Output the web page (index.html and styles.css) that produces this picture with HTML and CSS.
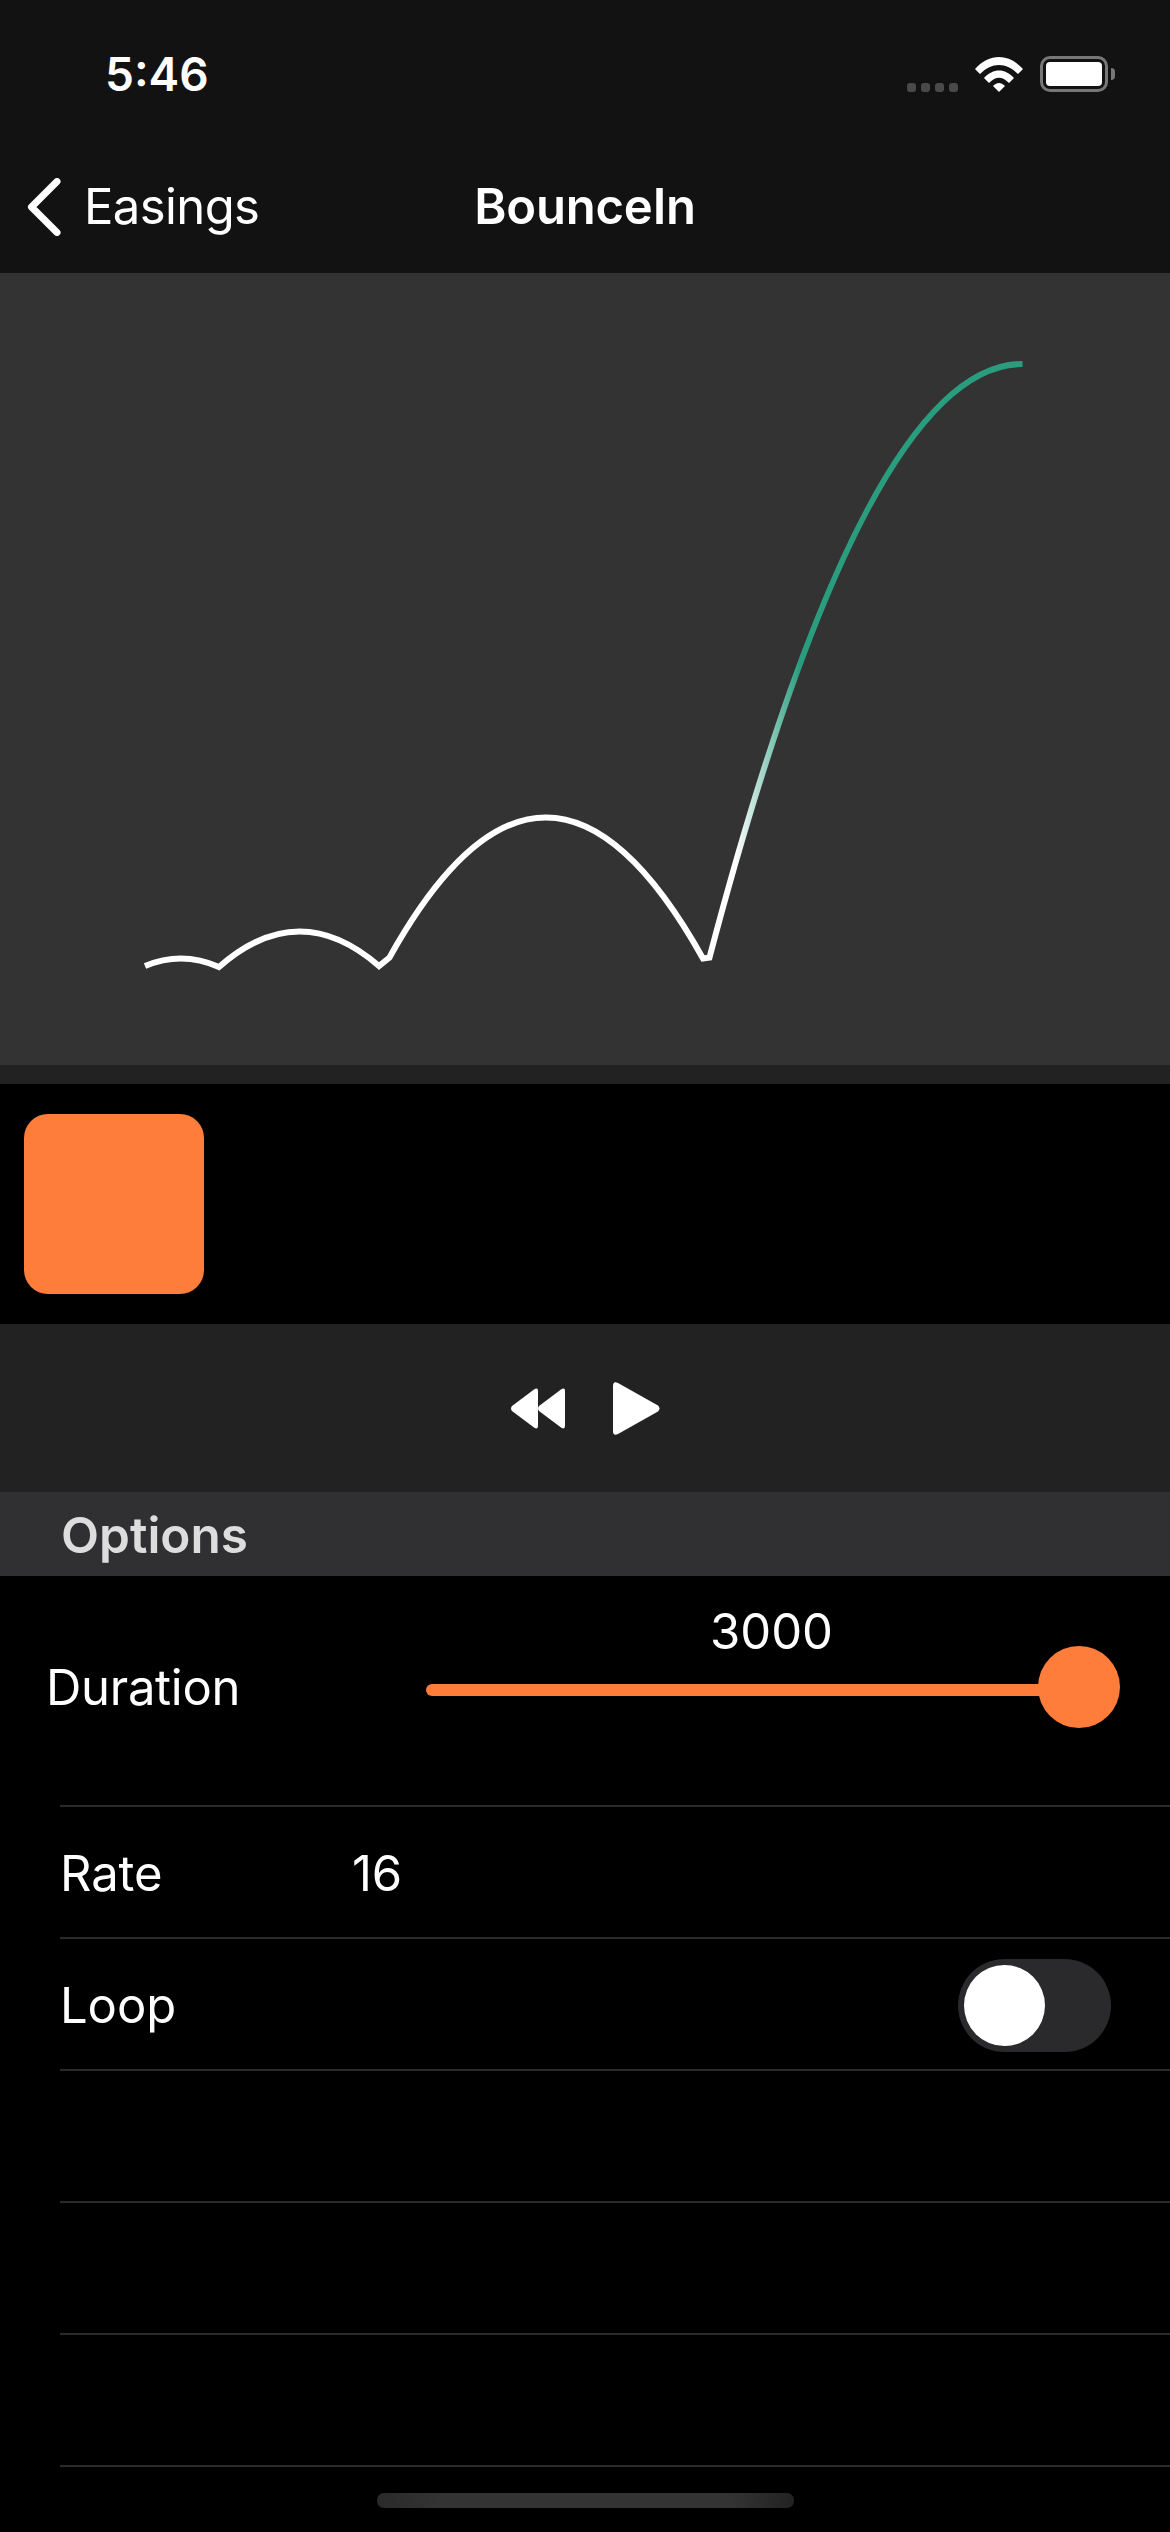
FILE: index.html
```html
<!DOCTYPE html>
<html lang="en">

<head>
    <meta charset="UTF-8">
    <meta name="viewport" content="width=device-width, initial-scale=1.0">
    <title>BounceIn</title>
    <link rel="stylesheet" href="styles.css">
</head>

<body>
    <header class="top-bar">
        <div class="status-bar">
            <span class="clock">5:46</span>
            <div class="status-icons">
                <div class="signal">
                    <span></span><span></span><span></span><span></span>
                </div>
                <svg class="wifi" width="48" height="35" viewBox="0 0 48 35">
                    <path d="M0 12 C14 -4 34 -4 48 12 L43 17 C31 5 17 5 5 17 Z" fill="#fff" />
                    <path d="M9 21 C18 11 30 11 39 21 L34 26 C27 19 21 19 14 26 Z" fill="#fff" />
                    <path d="M18 29 C22 25 26 25 30 29 L24 35 Z" fill="#fff" />
                </svg>
                <div class="battery">
                    <div class="battery-level"></div>
                </div>
                <div class="battery-tip"></div>
            </div>
        </div>
        <nav class="nav-bar">
            <div class="nav-back">
                <svg width="34" height="58" viewBox="0 0 34 58">
                    <path d="M30 3.500 L4.500 29 L30 54.500" fill="none" stroke="#fff" stroke-width="7" stroke-linecap="round" stroke-linejoin="round" />
                </svg>
                <span>Easings</span>
            </div>
            <h1 class="nav-title">BounceIn</h1>
        </nav>
    </header>

    <section class="chart">
        <svg width="1170" height="792" viewBox="0 0 1170 792">
            <defs>
                <linearGradient id="curve-fade" gradientUnits="userSpaceOnUse" x1="735" y1="0" x2="800" y2="0">
                    <stop offset="0" stop-color="#fff" />
                    <stop offset="1" stop-color="#2a9d7f" />
                </linearGradient>
            </defs>
            <!-- arcos da curva BounceIn -->
            <path class="curve" stroke="url(#curve-fade)" d="M145 693 Q182 677.500 219 694 Q299 623.500 379 693 L389.500 684.500 Q546 404 703 685.500 L709.500 684.500 Q866 91 1022.500 91" />
        </svg>
    </section>
    <div class="chart-footer"></div>

    <section class="stage">
        <div class="box"></div>
    </section>

    <section class="controls">
        <svg width="54" height="41" viewBox="0 0 54 41">
            <path d="M23 1.500 Q27 -1 27 3 L27 38 Q27 42 23 39.500 L1 23 Q-1 20.500 1 18 Z" fill="#fff" />
            <path d="M50 1.500 Q54 -1 54 3 L54 38 Q54 42 50 39.500 L28 23 Q26 20.500 28 18 Z" fill="#fff" />
        </svg>
        <svg width="47" height="53" viewBox="0 0 47 53">
            <path d="M0 4 Q0 -1.500 5 1 L45 23.500 Q48 26.500 45 29.500 L5 52 Q0 54.500 0 49 Z" fill="#fff" />
        </svg>
    </section>

    <h2 class="section-title">Options</h2>

    <section class="slider-row">
        <span class="slider-label">Duration</span>
        <div class="slider">
            <span class="slider-value">3000</span>
            <div class="slider-track"></div>
            <div class="slider-thumb"></div>
        </div>
    </section>

    <ul class="option-list">
        <li class="option">
            <span class="option-name">Rate</span>
            <span>16</span>
        </li>
        <li class="option">
            <span class="option-name">Loop</span>
            <div class="switch">
                <div class="switch-knob"></div>
            </div>
        </li>
        <li class="option"></li>
        <li class="option"></li>
        <li class="option"></li>
        <li class="option"></li>
    </ul>

    <div class="home-indicator"></div>
</body>

</html>
```
FILE: styles.css
```css
body {
    margin: 0;
    height: 2532px;
    position: relative;
    overflow: hidden;
    background-color: #000;
    color: #fff;
    font-family: Inter, "Liberation Sans", sans-serif;
}

.top-bar {
    height: 273px;
    background-color: #121212;
}

.status-bar {
    height: 148px;
    display: flex;
    justify-content: space-between;
    align-items: flex-start;
}

.clock {
    margin: 50px 0 0 105px;
    font-size: 46px;
    line-height: 48px;
    font-weight: 600;
}

.status-icons {
    display: flex;
    align-items: flex-end;
    margin: 56px 55px 0 0;
    height: 36px;
}

.signal {
    display: flex;
    gap: 5px;
    margin-right: 17px;
}

.signal span {
    width: 9px;
    height: 9px;
    border-radius: 3px;
    background-color: #4a4a4a;
}

.wifi {
    margin-right: 17px;
}

.battery {
    box-sizing: border-box;
    width: 68px;
    height: 36px;
    padding: 3px;
    border: 3px solid #777;
    border-radius: 10px;
}

.battery-level {
    height: 100%;
    background-color: #fff;
    border-radius: 4px;
}

.battery-tip {
    width: 4px;
    height: 12px;
    margin: 0 0 12px 3px;
    background-color: #777;
    border-radius: 0 4px 4px 0;
}

.nav-bar {
    position: relative;
    height: 125px;
    display: flex;
    align-items: flex-start;
    justify-content: center;
}

.nav-back {
    position: absolute;
    left: 27px;
    top: 29px;
    display: flex;
    align-items: center;
    gap: 23px;
    font-size: 49px;
    letter-spacing: -0.6px;
}

.nav-title {
    margin: 29px 0 0;
    font-size: 49px;
    line-height: 60px;
    font-weight: 600;
    letter-spacing: -0.2px;
}

.chart {
    height: 792px;
    background-color: #333;
}

.chart svg {
    display: block;
}

.curve {
    fill: none;
    stroke-width: 6;
    stroke-miterlimit: 10;
}

.chart-footer {
    height: 19px;
    background-color: #222;
}

.stage {
    height: 240px;
    padding: 30px 24px;
    box-sizing: border-box;
}

.box {
    width: 180px;
    height: 180px;
    border-radius: 24px;
    background-color: #ff7d3a;
}

.controls {
    height: 168px;
    background-color: #222;
    display: flex;
    align-items: center;
    justify-content: center;
    gap: 48px;
}

.section-title {
    margin: 0;
    height: 84px;
    padding-left: 61px;
    background-color: #303032;
    color: #ddd;
    font-size: 49.5px;
    line-height: 86px;
    font-weight: 600;
}

.slider-row {
    height: 229px;
    display: flex;
    align-items: flex-start;
}

.slider-label {
    flex-shrink: 0;
    width: 192px;
    margin: 82px 0 0 46px;
    font-size: 49px;
    line-height: 60px;
    letter-spacing: -0.3px;
}

.slider {
    position: relative;
    flex: 1;
    margin-left: 188px;
    padding-top: 26px;
}

.slider-value {
    display: block;
    margin-left: 284px;
    font-size: 49px;
    line-height: 60px;
}

.slider-track {
    width: 620px;
    height: 12px;
    margin-top: 22px;
    border-radius: 6px;
    background-color: #ff7d3a;
}

.slider-thumb {
    position: absolute;
    left: 612px;
    top: 70px;
    width: 82px;
    height: 82px;
    border-radius: 50%;
    background-color: #ff7d3a;
}

.option-list {
    margin: 0 0 0 60px;
    padding: 0;
    list-style: none;
}

.option {
    box-sizing: border-box;
    height: 132px;
    padding-top: 2px;
    border-top: 2px solid #2a2a2a;
    display: flex;
    align-items: center;
    font-size: 49px;
    letter-spacing: -0.1px;
}

.option-name {
    width: 292px;
}

.switch {
    box-sizing: border-box;
    width: 153px;
    height: 93px;
    margin-left: 606px;
    padding: 6px;
    border-radius: 47px;
    background-color: #2a2a2c;
}

.switch-knob {
    width: 81px;
    height: 81px;
    border-radius: 50%;
    background-color: #fff;
}

.home-indicator {
    position: absolute;
    left: 377px;
    top: 2493px;
    width: 417px;
    height: 15px;
    border-radius: 7px;
    background: linear-gradient(to right, #2a2a2a, #333 15%, #333 85%, #222);
}
```
